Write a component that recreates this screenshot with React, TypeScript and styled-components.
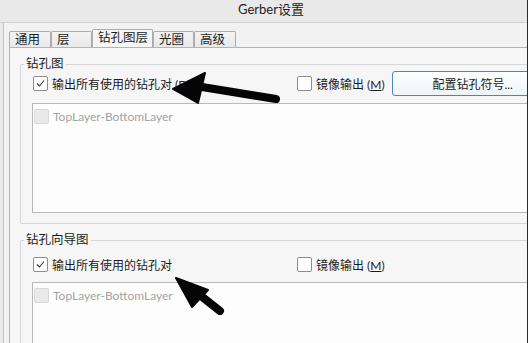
import styled, { createGlobalStyle } from "styled-components";

const GlobalStyle = createGlobalStyle`
    html, body {
        margin: 0;
        padding: 0;
        background: #ffffff;
    }
    body {
        font-family: Lato, "Noto Sans CJK SC", sans-serif;
        font-size: 12px;
        color: #1b1b1b;
    }
`;

const tabs = [
    { label: "通用", width: 42 },
    { label: "层", width: 41 },
    { label: "钻孔图层", width: 61, active: true },
    { label: "光圈", width: 41 },
    { label: "高级", width: 42 },
];

function Check({ checked, disabled }: { checked?: boolean; disabled?: boolean }) {
    return (
        <Box $disabled={disabled}>
            {checked && (
                <svg width="11" height="11" viewBox="0 0 11 11">
                    <polyline points="2,5.5 4.5,8 9,2.5" fill="none" stroke="#333" strokeWidth="1.1" />
                </svg>
            )}
        </Box>
    );
}

export default function App() {
    return (
        <>
            <GlobalStyle />
            <Window>
                <TitleBar>Gerber设置</TitleBar>
                <Frame>
                    <Body>
                        <TabStrip>
                            {tabs.map((t) => (
                                <Tab key={t.label} $width={t.width} $active={t.active}>
                                    {t.label}
                                </Tab>
                            ))}
                        </TabStrip>
                        <Panel>
                            <GroupBox $padTop={6}>
                                <GroupTitle>钻孔图</GroupTitle>
                                <Row>
                                    <Option $width={264}>
                                        <Check checked />
                                        <span>
                                            输出所有使用的钻孔对 (<U>D</U>)
                                        </span>
                                    </Option>
                                    <Option>
                                        <Check />
                                        <span>
                                            镜像输出 (<U>M</U>)
                                        </span>
                                    </Option>
                                    <Button>配置钻孔符号...</Button>
                                </Row>
                                <ListBox $top={7} $height={110}>
                                    <ListItem>
                                        <Check disabled />
                                        <span>TopLayer-BottomLayer</span>
                                    </ListItem>
                                </ListBox>
                            </GroupBox>
                            <GroupBox $padTop={11}>
                                <GroupTitle>钻孔向导图</GroupTitle>
                                <Row>
                                    <Option $width={264}>
                                        <Check checked />
                                        <span>输出所有使用的钻孔对</span>
                                    </Option>
                                    <Option>
                                        <Check />
                                        <span>
                                            镜像输出 (<U>M</U>)
                                        </span>
                                    </Option>
                                </Row>
                                <ListBox $top={5} $height={110}>
                                    <ListItem>
                                        <Check disabled />
                                        <span>TopLayer-BottomLayer</span>
                                    </ListItem>
                                </ListBox>
                            </GroupBox>
                        </Panel>
                    </Body>
                </Frame>
                <Arrows width="528" height="343" viewBox="0 0 528 343">
                    <g fill="#050505" stroke="#050505" strokeLinejoin="round">
                        <line x1="276" y1="99" x2="196" y2="86" strokeWidth="8" strokeLinecap="round" />
                        <polygon points="173,89 205,73 198,103" strokeWidth="2" />
                        <line x1="220" y1="311" x2="196" y2="292" strokeWidth="8" strokeLinecap="round" />
                        <polygon points="176,278 208,290 192,307" strokeWidth="2" />
                    </g>
                </Arrows>
            </Window>
        </>
    );
}

const Window = styled.div`
    position: relative;
    width: 528px;
    height: 343px;
    overflow: hidden;
    background: #e9e9e9;
    border-right: 1px solid #2a2a2a;
    box-sizing: border-box;
`;

const TitleBar = styled.div`
    height: 23px;
    line-height: 19px;
    padding-left: 15px;
    text-align: center;
    font-size: 13px;
    color: #222;
    border-bottom: 1px solid #cfcfcf;
    box-sizing: border-box;
`;

const Frame = styled.div`
    padding-left: 3px;
    height: 320px;
    display: flex;
`;

const Body = styled.div`
    flex: 1;
    border-left: 1px solid #c6c6c6;
    background: #f2f2f2;
    padding: 6px 0 0 5px;
    display: flex;
    flex-direction: column;
`;

const TabStrip = styled.div`
    display: flex;
    align-items: flex-end;
    height: 18px;
`;

const Tab = styled.div<{ $width: number; $active?: boolean }>`
    width: ${(p) => p.$width}px;
    height: ${(p) => (p.$active ? 18 : 16)}px;
    box-sizing: border-box;
    border: 1px solid #adadad;
    border-bottom: none;
    border-radius: 2px 2px 0 0;
    padding-left: 5px;
    line-height: ${(p) => (p.$active ? 16 : 15)}px;
    font-size: 12.5px;
    background: ${(p) => (p.$active ? "#f6f6f6" : "linear-gradient(#f3f3f3, #e9e9e9)")};
    color: #1b1b1b;
    white-space: nowrap;
`;

const Panel = styled.div`
    width: 600px;
    flex: 1;
    border-top: 1px solid #b4b4b4;
    border-left: 1px solid #b4b4b4;
    background: #f6f6f6;
    padding: 16px 0 0 10px;
    display: flex;
    flex-direction: column;
    gap: 16px;
`;

const GroupBox = styled.div<{ $padTop: number }>`
    position: relative;
    border: 1px solid #d6d6d6;
    border-radius: 2px;
    padding: ${(p) => p.$padTop}px 0 10px 11px;
    flex-shrink: 0;
`;

const GroupTitle = styled.span`
    position: absolute;
    top: -9px;
    left: 3px;
    padding: 0 2px;
    background: #f6f6f6;
    line-height: 16px;
    font-size: 12.5px;
`;

const Row = styled.div`
    display: flex;
    align-items: center;
    height: 25px;
    padding-left: 1px;
`;

const Option = styled.label<{ $width?: number }>`
    display: flex;
    align-items: center;
    gap: 4px;
    ${(p) => (p.$width ? `width: ${p.$width}px;` : "")}
    flex-shrink: 0;
    white-space: nowrap;
`;

const U = styled.span`
    text-decoration: underline;
`;

const Box = styled.span<{ $disabled?: boolean }>`
    width: 15px;
    height: 15px;
    box-sizing: border-box;
    border: 1px solid ${(p) => (p.$disabled ? "#d9d9d9" : "#8e8e8e")};
    border-radius: 2px;
    background: ${(p) => (p.$disabled ? "#e9e9e9" : "#ffffff")};
    display: flex;
    align-items: center;
    justify-content: center;
    flex-shrink: 0;
`;

const Button = styled.div`
    margin-left: 7px;
    width: 162px;
    height: 25px;
    box-sizing: border-box;
    border: 1px solid #4a86b8;
    border-radius: 3px;
    background: linear-gradient(#fdfeff, #eef4fa);
    display: flex;
    align-items: center;
    justify-content: center;
    flex-shrink: 0;
    font-size: 12px;
`;

const ListBox = styled.div<{ $top: number; $height: number }>`
    margin-top: ${(p) => p.$top}px;
    height: ${(p) => p.$height}px;
    box-sizing: border-box;
    border: 1px solid #b9b9b9;
    background: #fdfdfd;
    padding: 5px 0 0 1px;
`;

const ListItem = styled.div`
    display: flex;
    align-items: center;
    gap: 4px;
    color: #a3a3a3;
    font-size: 12px;
`;

const Arrows = styled.svg`
    position: absolute;
    left: 0;
    top: 0;
    pointer-events: none;
    filter: blur(0.4px);
`;
